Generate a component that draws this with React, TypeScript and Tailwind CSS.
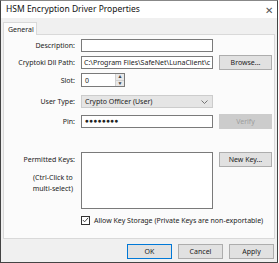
const font = { fontFamily: '"Noto Sans", "Open Sans", sans-serif' };

function Label({ children }: { children: React.ReactNode }) {
  return <div className="w-[71px] shrink-0 text-right whitespace-nowrap">{children}</div>;
}

function Btn({ children, disabled, primary }: { children: React.ReactNode; disabled?: boolean; primary?: boolean }) {
  return (
    <div
      className={
        "flex items-center justify-center h-[15px] border " +
        (primary
          ? "border-[#0078d7] bg-[#e1e1e1] text-[#222]"
          : disabled
          ? "border-[#cccccc] bg-[#cccccc] text-[#9d9d9d]"
          : "border-[#adadad] bg-[#e1e1e1] text-[#222]")
      }
    >
      {children}
    </div>
  );
}

export default function App() {
  return (
    <div className="w-[279px] h-[263px] bg-white text-[7px] leading-none text-[#222]" style={font}>
      <div className="w-[278px] h-[263px] border border-[#444] border-t-[#888] flex flex-col bg-[#f0f0f0]">
        <div className="h-[17px] bg-white flex items-center justify-between pl-[5px] pr-[4px] shrink-0">
          <span className="text-[8.5px] text-[#111]">HSM Encryption Driver Properties</span>
          <span className="text-[10px] text-[#555]">✕</span>
        </div>
        <div className="flex-1 flex flex-col px-[2px]">
          <div className="flex h-[16px] items-end pt-[3px]">
            <div className="h-[13px] w-[34px] bg-[#fbfbfb] border border-b-0 border-[#d9d9d9] flex items-center pl-[4px] relative top-[1px]">
              General
            </div>
          </div>
          <div className="h-[205px] border border-[#d9d9d9] bg-[#fbfbfb] flex flex-col pt-[4px]">
            <div className="flex items-center h-[13px] gap-[6px]">
              <Label>Description:</Label>
              <div className="w-[132px] h-[13px] border border-[#7a7a7a] bg-white" />
            </div>
            <div className="flex items-center h-[15px] gap-[6px] mt-[3px]">
              <Label>Cryptoki Dll Path:</Label>
              <div className="w-[132px] h-[13px] border border-[#7a7a7a] bg-white flex items-center pl-[2px] overflow-hidden whitespace-nowrap">
                C:\Program Files\SafeNet\LunaClient\c
              </div>
              <div className="w-[53px]">
                <Btn>Browse...</Btn>
              </div>
            </div>
            <div className="flex items-center h-[14px] gap-[6px] mt-[3px]">
              <Label>Slot:</Label>
              <div className="w-[44px] h-[14px] border border-[#7a7a7a] bg-white flex items-center pl-[3px] justify-between">
                <span>0</span>
                <div className="w-[9px] h-full flex flex-col border-l border-[#d0d0d0] text-[5px] text-[#444]">
                  <div className="flex-1 flex items-center justify-center bg-[#e8e8e8]">▲</div>
                  <div className="flex-1 flex items-center justify-center bg-[#e8e8e8] border-t border-[#d0d0d0]">▼</div>
                </div>
              </div>
            </div>
            <div className="flex items-center h-[13px] gap-[6px] mt-[8px]">
              <Label>User Type:</Label>
              <div className="w-[132px] h-[13px] border border-[#cccccc] bg-[#e5e5e5] flex items-center pl-[3px] pr-[4px] justify-between">
                <span>Crypto Officer (User)</span>
                <svg width="7" height="4" viewBox="0 0 7 4">
                  <path d="M0.5 0.5 L3.5 3.5 L6.5 0.5" fill="none" stroke="#666" strokeWidth="0.9" />
                </svg>
              </div>
            </div>
            <div className="flex items-center h-[14px] gap-[6px] mt-[6px]">
              <Label>Pin:</Label>
              <div className="w-[132px] h-[13px] border border-[#7a7a7a] bg-white flex items-center pl-[3px] text-[6.5px] tracking-[0.3px]">
                ●●●●●●●●
              </div>
              <div className="w-[53px]">
                <Btn disabled>Verify</Btn>
              </div>
            </div>
            <div className="flex items-start gap-[6px] mt-[24px]">
              <div className="w-[71px] shrink-0 text-right flex flex-col items-end pt-[4px] whitespace-nowrap">
                <div>Permitted Keys:</div>
                <div className="mt-[9px] leading-[11px] text-center pr-[2px]">
                  (Ctrl-Click to
                  <br />
                  multi-select)
                </div>
              </div>
              <div className="w-[132px] h-[57px] border border-[#7a7a7a] bg-white" />
              <div className="w-[53px]">
                <Btn>New Key...</Btn>
              </div>
            </div>
            <div className="flex items-center h-[10px] mt-[6px] pl-[77px] gap-[4px] whitespace-nowrap">
              <div className="w-[9px] h-[9px] border border-[#333] bg-white flex items-center justify-center">
                <svg width="7" height="6" viewBox="0 0 7 6">
                  <path d="M0.8 3 L2.6 4.8 L6.2 0.8" fill="none" stroke="#333" strokeWidth="0.9" />
                </svg>
              </div>
              <span>Allow Key Storage (Private Keys are non-exportable)</span>
            </div>
          </div>
          <div className="flex justify-end gap-[6px] mt-[5px] pr-[1px]">
            <div className="w-[45px]"><Btn primary>OK</Btn></div>
            <div className="w-[45px]"><Btn>Cancel</Btn></div>
            <div className="w-[45px]"><Btn>Apply</Btn></div>
          </div>
        </div>
      </div>
    </div>
  );
}
